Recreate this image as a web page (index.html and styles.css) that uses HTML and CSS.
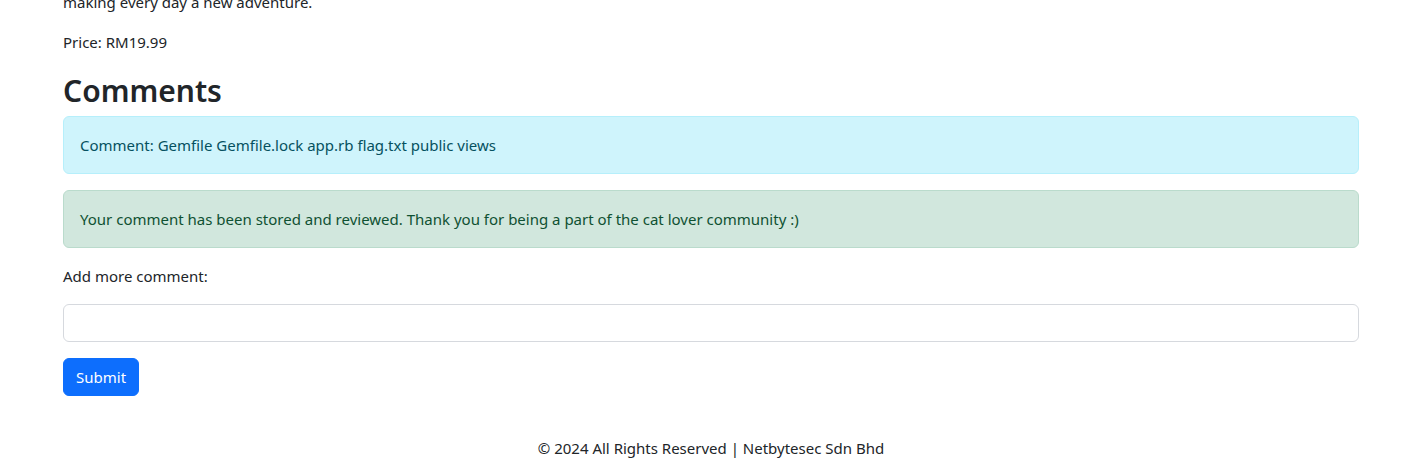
FILE: index.html
```html
<!DOCTYPE html>
<html lang="en">
<head>
<meta charset="utf-8">
<title>Comments</title>
<link rel="stylesheet" href="styles.css">
</head>
<body>
<main class="container">
  <p class="desc">making every day a new adventure.</p>
  <p class="price">Price: RM19.99</p>
  <h2 class="heading">Comments</h2>
  <div class="alert alert-info">Comment: Gemfile Gemfile.lock app.rb flag.txt public views</div>
  <div class="alert alert-success">Your comment has been stored and reviewed. Thank you for being a part of the cat lover community :)</div>
  <form class="form">
    <label class="form-label" for="comment">Add more comment:</label>
    <input class="form-control" type="text" id="comment" name="comment">
    <button class="btn-primary" type="button">Submit</button>
  </form>
  <footer class="footer">© 2024 All Rights Reserved | Netbytesec Sdn Bhd</footer>
</main>
</body>
</html>
```
FILE: styles.css
```css
* { box-sizing: border-box; }
html, body { margin: 0; padding: 0; }
body {
  font-family: "Noto Sans", "Open Sans", sans-serif;
  font-size: 15px;
  line-height: 24px;
  color: #212529;
  background: #fff;
  overflow: hidden;
}
.container {
  width: 1296px;
  margin-left: 63px;
}
.desc {
  margin: -10px 0 16px;
}
.price { margin: 0 0 16px; }
.heading {
  margin: 0 0 6px;
  padding-top: 2px;
  font-size: 30px;
  font-weight: 600;
  line-height: 38px;
}
.alert {
  padding: 16px;
  margin-bottom: 16px;
  border: 1px solid transparent;
  border-radius: 6px;
}
.alert-info { background: #cff4fc; border-color: #b6effb; color: #055160; }
.alert-success { background: #d1e7dd; border-color: #badbcc; color: #0f5132; }
.form { display: flex; flex-direction: column; align-items: flex-start; }
.form-label { display: block; margin-bottom: 16px; }
.form-control {
  display: block;
  width: 100%;
  height: 38px;
  padding: 6px 12px;
  font: inherit;
  border: 1px solid #d6d9de;
  border-radius: 6px;
  margin: 0 0 16px;
}
.btn-primary {
  font: inherit;
  color: #fff;
  background: #0d6efd;
  border: 1px solid #0d6efd;
  border-radius: 6px;
  padding: 6px 12px;
  height: 38px;
  line-height: 24px;
}
.footer {
  margin-top: 40px;
  text-align: center;
}
```
